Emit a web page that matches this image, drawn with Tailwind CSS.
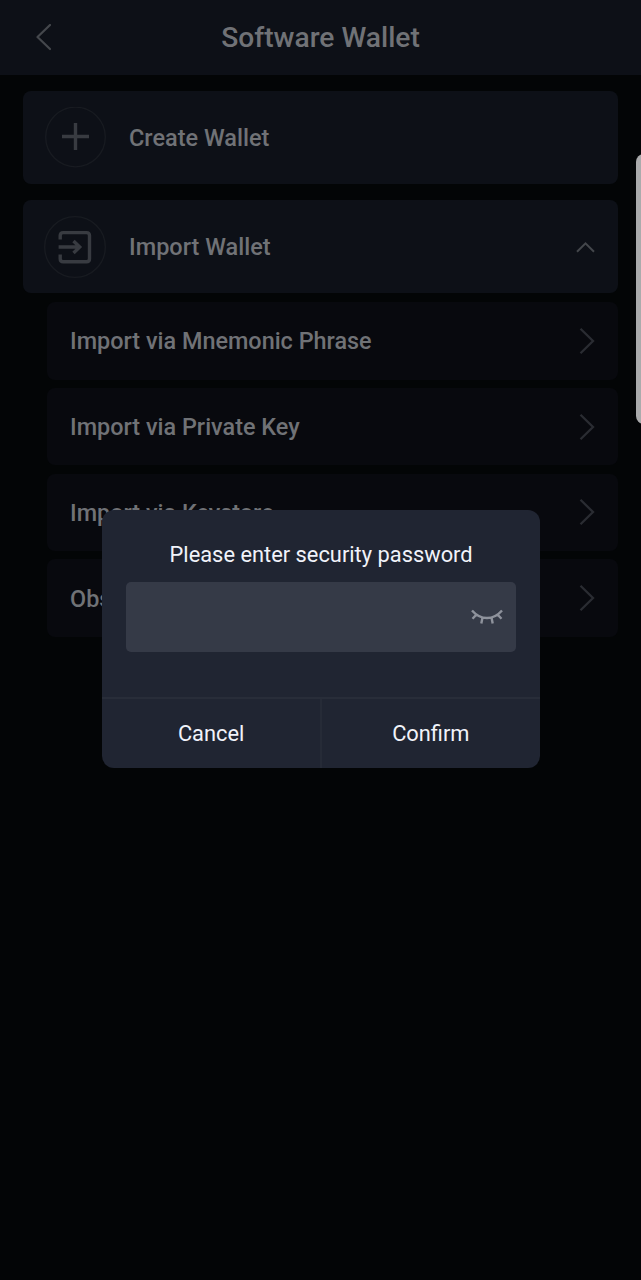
<!DOCTYPE html>
<html lang="en">
<head>
    <meta charset="UTF-8">
    <meta name="viewport" content="width=device-width, initial-scale=1.0">
    <title>Software Wallet</title>
    <script src="https://cdn.jsdelivr.net/npm/@tailwindcss/browser@4"></script>
</head>
<body class="bg-[#030506] text-[#707276] font-['Roboto',sans-serif]">
    <div class="relative w-full h-[1280px] overflow-hidden">
        <header class="grid grid-cols-[88px_1fr_88px] items-center h-[75.4px] bg-[#0d1017]">
            <svg class="ml-[35px] w-4 h-7" viewBox="0 0 16 28" fill="none" stroke="#44474c" stroke-width="2.2" stroke-linecap="round" stroke-linejoin="round"><path d="M15 1L2.500 13L15 25"/></svg>
            <h1 class="text-center text-[28.2px] leading-none font-medium">Software Wallet</h1>
        </header>

        <main class="flex flex-col px-[23px] pt-4">
            <a class="flex items-center h-[93px] pl-[22px] rounded-lg bg-[#0d1017]">
                <svg class="w-[61px] h-[61px]" viewBox="0 0 61 61" fill="none"><circle cx="30.5" cy="30" r="29.8" stroke="#181b21" stroke-width="1.3"/><path d="M17 29.500H44M30.500 16V43" stroke="#383b41" stroke-width="3.4"/></svg>
                <span class="ml-[23px] pt-0.5 text-[23.5px] leading-none font-medium">Create Wallet</span>
            </a>
            <a class="flex items-center h-[93px] mt-4 pl-[21px] pr-[23px] rounded-lg bg-[#0d1017]">
                <svg class="w-[62px] h-[62px]" viewBox="0 0 62 62" fill="none"><circle cx="31" cy="31" r="30.3" stroke="#181b21" stroke-width="1.3"/><g stroke="#383b41" stroke-width="3.4"><path d="M16.200 23.500V19.600Q16.200 16.600 19.200 16.600H42.500Q45.500 16.600 45.500 19.600V42.800Q45.500 45.800 42.500 45.800H19.200Q16.200 45.800 16.200 42.800V38.500"/><path d="M14.600 31H36M29.500 25L35.700 31L29.500 37"/></g></svg>
                <span class="ml-[23px] pt-0.5 text-[23.5px] leading-none font-medium">Import Wallet</span>
                <svg class="ml-auto w-[19px] h-3" viewBox="0 0 19 12" fill="none" stroke="#44474c" stroke-width="2"><path d="M1 10.800L9.500 2.300L18 10.800"/></svg>
            </a>

            <div class="flex flex-col gap-[8.3px] mt-[8.7px] ml-[23.5px] text-[23.42px] leading-none font-medium">
                <a class="flex items-center justify-between h-[77.5px] pl-[23.5px] pr-[23px] rounded-lg bg-[#08090e]">
                    <span class="pt-0.5">Import via Mnemonic Phrase</span>
                    <svg class="w-4 h-7" viewBox="0 0 16 28" fill="none" stroke="#2a2c32" stroke-width="2.3"><path d="M1.500 1.800L14 14L1.500 26.200"/></svg>
                </a>
                <a class="flex items-center justify-between h-[77.5px] pl-[23.5px] pr-[23px] rounded-lg bg-[#08090e]">
                    <span class="pt-0.5">Import via Private Key</span>
                    <svg class="w-4 h-7" viewBox="0 0 16 28" fill="none" stroke="#2a2c32" stroke-width="2.3"><path d="M1.500 1.800L14 14L1.500 26.200"/></svg>
                </a>
                <a class="flex items-center justify-between h-[77.5px] pl-[23.5px] pr-[23px] rounded-lg bg-[#08090e]">
                    <span class="pt-0.5">Import via Keystore</span>
                    <svg class="w-4 h-7" viewBox="0 0 16 28" fill="none" stroke="#2a2c32" stroke-width="2.3"><path d="M1.500 1.800L14 14L1.500 26.200"/></svg>
                </a>
                <a class="flex items-center justify-between h-[77.5px] pl-[23.5px] pr-[23px] rounded-lg bg-[#08090e]">
                    <span class="pt-0.5">Observe Wallet</span>
                    <svg class="w-4 h-7" viewBox="0 0 16 28" fill="none" stroke="#2a2c32" stroke-width="2.3"><path d="M1.500 1.800L14 14L1.500 26.200"/></svg>
                </a>
            </div>
        </main>

        <!-- edge panel handle -->
        <div class="absolute left-[636px] top-[154px] w-5 h-[270px] rounded-lg bg-[#aaabac]"></div>

        <!-- password dialog -->
        <div class="absolute left-[102.4px] top-[510px] flex flex-col w-[437.4px] h-[257.5px] rounded-xl bg-[#202532] text-[#f1f3fa] text-[21.85px] leading-none overflow-hidden">
            <p class="mt-[34px] text-center">Please enter security password</p>
            <div class="flex items-center justify-end h-[70px] mt-4 mx-[23.5px] pr-[13.5px] rounded-[5px] bg-[#353a47]">
                <svg class="w-8 h-4" viewBox="0 0 32 16" fill="none" stroke="#8e929c" stroke-width="2.4"><path d="M1 1.500Q7.500 9 16 9Q24.500 9 31 1.500M5.500 5.500L1.500 9.800M11.500 8.500L10.300 14.500M20.500 8.500L21.700 14.500M26.500 5.500L30.500 9.800"/></svg>
            </div>
            <div class="grid grid-cols-[219.5px_1fr] flex-1 mt-[45px] border-t-2 border-[#282d39]">
                <button class="pt-0.5 border-r-2 border-[#262b37]">Cancel</button>
                <button class="pt-0.5">Confirm</button>
            </div>
        </div>
    </div>
</body>
</html>
